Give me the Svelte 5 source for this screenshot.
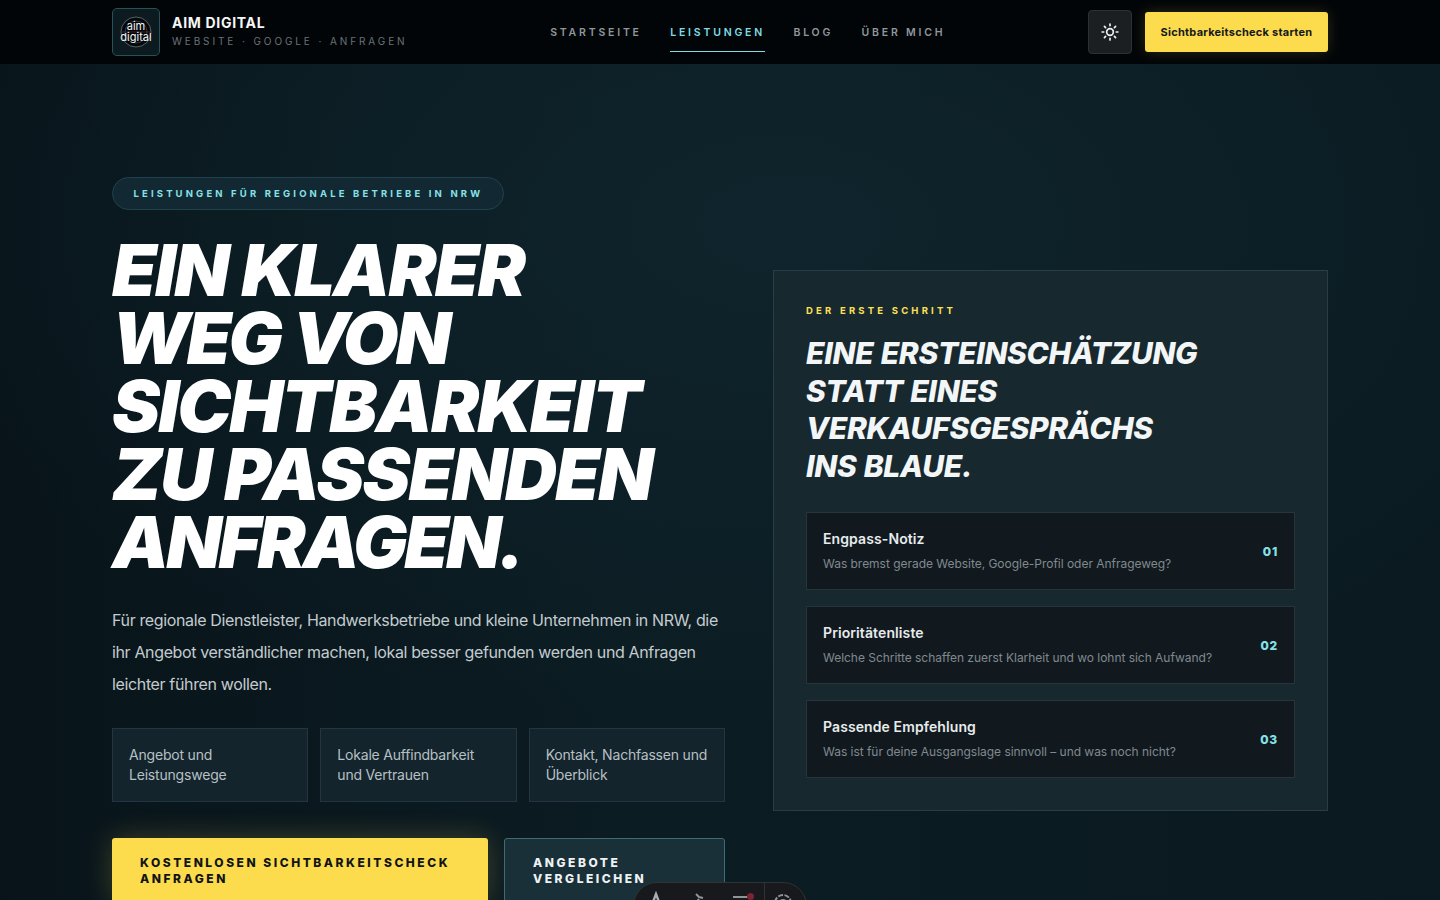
<script>
  const nav = [
    { label: 'Startseite', active: false },
    { label: 'Leistungen', active: true },
    { label: 'Blog', active: false },
    { label: 'Über mich', active: false }
  ];
  const chips = ['Angebot und Leistungswege', 'Lokale Auffindbarkeit und Vertrauen', 'Kontakt, Nachfassen und Überblick'];
  const steps = [
    { t: 'Engpass-Notiz', d: 'Was bremst gerade Website, Google-Profil oder Anfrageweg?', n: '01' },
    { t: 'Prioritätenliste', d: 'Welche Schritte schaffen zuerst Klarheit und wo lohnt sich Aufwand?', n: '02' },
    { t: 'Passende Empfehlung', d: 'Was ist für deine Ausgangslage sinnvoll – und was noch nicht?', n: '03' }
  ];
</script>

<div class="page">
  <header>
    <div class="wrap bar">
      <a class="brand" href="#top">
        <span class="logo">
          <svg viewBox="0 0 32 32" width="32" height="32" aria-hidden="true">
            <circle cx="16" cy="16" r="15" fill="#05080b" stroke="#8b999d" stroke-width=".6"/>
            <circle cx="16" cy="16" r="11" fill="none" stroke="#5c6669" stroke-width=".5"/>
            <path d="M1 16h30" stroke="#7a3038" stroke-width=".5"/>
          </svg>
          <span class="logotext"><span>aim</span><span>digital</span></span>
        </span>
        <span class="brandtext">
          <strong>AIM DIGITAL</strong>
          <small>WEBSITE · GOOGLE · ANFRAGEN</small>
        </span>
      </a>
      <nav>
        {#each nav as n}
          <a href="#top" class:active={n.active}>{n.label}</a>
        {/each}
      </nav>
      <div class="actions">
        <button class="theme" aria-label="Farbschema">
          <svg viewBox="0 0 24 24" width="20" height="20" fill="none" stroke="#f1f3f3" stroke-width="2" stroke-linecap="round">
            <circle cx="12" cy="12" r="4"/>
            <path d="M12 2.5v2M12 19.5v2M2.5 12h2M19.5 12h2M5.3 5.3l1.4 1.4M17.3 17.3l1.4 1.4M5.3 18.7l1.4-1.4M17.3 6.7l1.4-1.4"/>
          </svg>
        </button>
        <a class="cta" href="#top">Sichtbarkeitscheck starten</a>
      </div>
    </div>
  </header>

  <main class="wrap hero">
    <section class="left">
      <span class="pill">Leistungen für regionale Betriebe in NRW</span>
      <h1>Ein klarer<br /><span class="tight">Weg von</span><br />Sichtbarkeit<br />zu passenden<br /><span class="tight">Anfragen.</span></h1>
      <p class="lead">Für regionale Dienstleister, Handwerksbetriebe und kleine Unternehmen in NRW, die ihr Angebot verständlicher machen, lokal besser gefunden werden und Anfragen leichter führen wollen.</p>
      <div class="chips">
        {#each chips as c}
          <div class="chip">{c}</div>
        {/each}
      </div>
      <div class="btns">
        <a class="primary" href="#top">Kostenlosen Sichtbarkeitscheck anfragen</a>
        <a class="secondary" href="#top">Angebote vergleichen</a>
      </div>
    </section>

    <aside class="card">
      <div class="eyebrow">Der erste Schritt</div>
      <h2>Eine Ersteinschätzung<br />statt eines<br />Verkaufsgesprächs<br />ins Blaue.</h2>
      <div class="steps">
        {#each steps as s}
          <div class="step">
            <div>
              <div class="st">{s.t}</div>
              <div class="sd">{s.d}</div>
            </div>
            <span class="num">{s.n}</span>
          </div>
        {/each}
      </div>
    </aside>
  </main>

  <div class="dock" aria-hidden="true">
    <svg class="i1" viewBox="0 0 20 20" width="20" height="20" fill="none" stroke="#a9aeb0" stroke-width="2.4"><path d="M4 19 10 3l6 16M6.5 13h7"/></svg>
    <svg class="i2" viewBox="0 0 20 20" width="20" height="20" fill="none" stroke="#8f9496" stroke-width="2"><path d="M3 19 12 8M9 3l3 3 4 1M14 11l3 3"/></svg>
    <span class="i3"><i></i></span>
    <span class="sep"></span>
    <svg class="i4" viewBox="0 0 20 20" width="20" height="20" fill="none" stroke="#8f9496" stroke-width="2"><circle cx="10" cy="12" r="8" stroke-dasharray="5 1.5"/><circle cx="10" cy="12" r="3"/></svg>
  </div>
</div>

<style>
  :global(body) {
    margin: 0;
    background: #0b1b22;
    overflow: hidden;
  }
  * { box-sizing: border-box; }
  a { text-decoration: none; color: inherit; }
  .page {
    height: 900px;
    overflow: hidden;
    font-family: Inter, "Liberation Sans", sans-serif;
    color: #fff;
    background:
      radial-gradient(900px 500px at 55% 25%, #0f242c 0%, rgba(15, 36, 44, 0) 100%),
      linear-gradient(90deg, #08141a 0%, #0c1c23 45%, #0a1a20 100%);
  }
  .wrap { width: 1216px; margin: 0 auto; }
  header { height: 64px; background: #020508; }
  .bar { height: 64px; display: flex; justify-content: space-between; align-items: center; }
  .brand { display: flex; align-items: center; gap: 12px; }
  .logo {
    position: relative;
    width: 48px; height: 48px;
    display: flex; align-items: center; justify-content: center;
    border: 1px solid #26535a;
    border-radius: 5px;
    background: #0d1a1f;
  }
  .logotext {
    position: absolute; inset: 0;
    display: flex; flex-direction: column; align-items: center; justify-content: center;
    font-size: 11px; line-height: 11.5px; color: #f2f4f4; text-align: center;
  }
  .brandtext { display: flex; flex-direction: column; gap: 2px; padding-bottom: 2px; }
  .brandtext strong { font-size: 14px; line-height: 18px; font-weight: 700; letter-spacing: .7px; color: #f5f7f7; }
  .brandtext small { font-size: 10px; line-height: 14px; letter-spacing: 2.9px; color: #6a7276; white-space: nowrap; }
  nav { display: flex; gap: 28.4px; }
  nav a {
    height: 40px; display: flex; align-items: center; padding-top: 2px;
    font-size: 10.5px; font-weight: 600; letter-spacing: 2.8px; text-transform: uppercase; color: #8f979b;
    border-bottom: 1px solid transparent;
  }
  nav a.active { color: #7edce2; border-bottom-color: #7edce2; }
  .actions { display: flex; justify-content: flex-end; align-items: center; gap: 13px; }
  .theme {
    width: 44px; height: 44px; padding: 0;
    display: flex; align-items: center; justify-content: center;
    background: #1b1f22; border: 1px solid #2b3033; border-radius: 4px;
  }
  .cta {
    height: 40px; width: 183px;
    display: flex; align-items: center; justify-content: center;
    background: #fcdc4d; color: #14181a; border-radius: 3px;
    font-size: 11px; font-weight: 700; letter-spacing: .25px;
    box-shadow: 0 0 14px rgba(252, 220, 77, .18);
  }
  .hero {
    padding-top: 113px;
    display: grid; grid-template-columns: 613px 555px; column-gap: 48px; align-items: center;
  }
  .left { display: flex; flex-direction: column; align-items: flex-start; padding-bottom: 2px; }
  .pill {
    height: 33px; display: flex; align-items: center; padding: 0 19.5px 0 20.5px;
    border: 1px solid #21424c; border-radius: 17px; background: #122832;
    font-size: 9.5px; font-weight: 700; letter-spacing: 3.15px; text-transform: uppercase; color: #86e2e8;
  }
  h1 {
    margin: 26px 0 0;
    font-size: 72px; line-height: 68px; font-weight: 860; font-style: italic;
    letter-spacing: -1.8px; word-spacing: 1px; text-transform: uppercase; color: #fff;
  }
  h1 .tight { letter-spacing: -3.1px; }
  .lead { margin: 28px 0 0; font-size: 16px; line-height: 32px; color: #c3cbce; letter-spacing: -.36px; }
  .chips { margin-top: 28px; display: grid; grid-template-columns: repeat(3, 1fr); gap: 12px; width: 100%; }
  .chip {
    height: 74px; padding: 16px; display: flex; align-items: center;
    background: #14242c; border: 1px solid #223540;
    font-size: 14px; line-height: 20px; color: #b6c0c4; letter-spacing: -.2px;
  }
  .btns { margin-top: 36px; display: grid; grid-template-columns: 376px 221px; gap: 16px; }
  .primary, .secondary {
    height: 64px; display: flex; align-items: center; padding-top: 2px;
    font-size: 12px; line-height: 16px; font-weight: 800; letter-spacing: 2.53px; text-transform: uppercase;
    border-radius: 3px;
  }
  .primary {
    padding-left: 28px; padding-right: 28px; background: #fcdc4d; color: #111416;
    box-shadow: 0 0 28px rgba(252, 220, 77, .22);
  }
  .secondary { padding-left: 28px; padding-right: 28px; background: #193039; border: 1px solid #3e6c74; color: #eef2f3; }
  .card {
    padding: 32px;
    background: #18282f; border: 1px solid #2a3c44;
  }
  .eyebrow { font-size: 9.5px; line-height: 16px; font-weight: 700; letter-spacing: 3.2px; text-transform: uppercase; color: #fde054; }
  h2 {
    margin: 16px 0 0;
    font-size: 30px; line-height: 37.5px; font-weight: 800; font-style: italic;
    letter-spacing: -.3px; word-spacing: 1px; text-transform: uppercase; color: #f3f6f6;
  }
  .steps { margin-top: 27px; display: flex; flex-direction: column; gap: 16px; }
  .step {
    height: 78px; padding: 0 16px;
    display: flex; align-items: center; justify-content: space-between;
    background: #11191f; border: 1px solid #26343b;
  }
  .st { font-size: 14px; line-height: 20px; font-weight: 600; color: #e7ebec; letter-spacing: .1px; }
  .sd { margin-top: 6px; font-size: 12px; line-height: 18px; color: #80898e; letter-spacing: -.03px; }
  .num { font-size: 12px; font-weight: 800; letter-spacing: .8px; color: #86e2e8; }
  .dock {
    position: fixed; left: 633px; top: 882px; width: 174px; height: 48px;
    background: #17191c; border: 1px solid #2f3336; border-radius: 24px;
  }
  .dock svg, .i3, .sep { position: absolute; }
  .i1 { left: 12px; top: 8px; }
  .i2 { left: 53px; top: 8px; }
  .i3 { left: 99px; top: 13px; width: 15px; height: 2px; background: #8f9496; }
  .i3 i { position: absolute; right: -6px; top: -3px; width: 7px; height: 7px; border-radius: 50%; background: #7a2436; }
  .sep { left: 130px; top: 0; width: 1px; height: 48px; background: #2f3336; }
  .i4 { left: 139px; top: 8px; }
</style>
